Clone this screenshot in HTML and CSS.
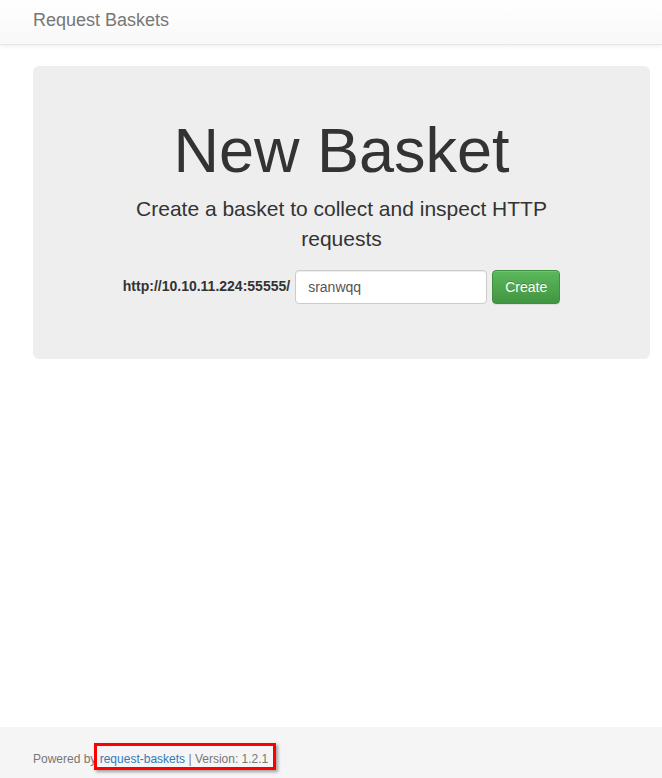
FILE: index.html
```html
<!DOCTYPE html>
<html lang="en">
<head>
<meta charset="utf-8">
<title>Request Baskets</title>
<link rel="stylesheet" href="styles.css">
</head>
<body>
<div class="page">
  <nav class="navbar">
    <div class="container">
      <a class="brand" href="#">Request Baskets</a>
    </div>
  </nav>
  <main class="container main">
    <section class="jumbotron">
      <h1 class="title">New Basket</h1>
      <p class="lead">Create a basket to collect and inspect HTTP requests</p>
      <form class="basket-form">
        <label class="base-url" for="basket-name">http://10.10.11.224:55555/</label>
        <input class="form-control" id="basket-name" type="text" value="sranwqq">
        <button class="btn-success" type="button">Create</button>
      </form>
    </section>
  </main>
  <footer class="footer">
    <div class="container">
      <p class="muted">Powered by <a href="#">request-baskets</a> | Version: 1.2.1</p>
    </div>
    <div class="highlight-box"></div>
  </footer>
</div>
</body>
</html>
```

FILE: styles.css
```css
* { box-sizing: border-box; }

html, body {
  margin: 0;
  padding: 0;
}

body {
  font-family: "Liberation Sans", Arial, Helvetica, sans-serif;
  font-size: 14px;
  line-height: 1.42857;
  color: #333;
  background: #fff;
}

.page {
  min-height: 100vh;
  display: flex;
  flex-direction: column;
}

.container {
  padding-left: 33px;
  padding-right: 12px;
}

.navbar {
  height: 45px;
  background-image: linear-gradient(to bottom, #ffffff 0%, #f8f8f8 100%);
  border-bottom: 1px solid #e7e7e7;
  box-shadow: inset 0 1px 0 rgba(255,255,255,.15), 0 1px 5px rgba(0,0,0,.075);
}

.brand {
  display: inline-block;
  padding-top: 10px;
  font-size: 18px;
  line-height: 20px;
  color: #777;
  text-decoration: none;
}

.main {
  margin-top: 21px;
}

.jumbotron {
  background: #eeeeee;
  border-radius: 6px;
  padding: 50px 60px 55px;
  text-align: center;
}

.title {
  margin: 0 0 9px;
  font-size: 63px;
  font-weight: 500;
  line-height: 1.1;
  color: #333;
}

.lead {
  max-width: 450px;
  margin: 0 auto 15px;
  font-size: 21px;
  font-weight: 300;
  line-height: 30px;
}

.basket-form {
  display: flex;
  justify-content: center;
  align-items: center;
  gap: 4px;
  margin: 0;
  padding-top: 1px;
}

.base-url {
  font-weight: bold;
  font-size: 14px;
  color: #333;
}

.form-control {
  width: 192px;
  height: 34px;
  padding: 6px 12px;
  font-family: inherit;
  font-size: 14px;
  color: #555;
  background: #fff;
  border: 1px solid #ccc;
  border-radius: 4px;
  box-shadow: inset 0 1px 1px rgba(0,0,0,.075);
  margin-left: 1px;
}

.btn-success {
  height: 34px;
  padding: 6px 12px;
  margin-left: 1px;
  font-family: inherit;
  font-size: 14px;
  line-height: 20px;
  color: #fff;
  background-image: linear-gradient(to bottom, #5cb85c 0%, #419641 100%);
  border: 1px solid #3e8f3e;
  border-radius: 4px;
  text-shadow: 0 -1px 0 rgba(0,0,0,.2);
  box-shadow: inset 0 1px 0 rgba(255,255,255,.15), 0 1px 1px rgba(0,0,0,.075);
}

.footer {
  position: relative;
  margin-top: auto;
  height: 51px;
  background: #f5f5f5;
}

.muted {
  margin: 0;
  padding-top: 24px;
  font-size: 12px;
  line-height: 17px;
  color: #777;
}

.muted a {
  color: #337ab7;
  text-decoration: none;
}

.highlight-box {
  position: absolute;
  left: 94px;
  top: 16px;
  width: 182px;
  height: 27px;
  border: 3px solid #ff0000;
  box-shadow: 2px 2px 3px rgba(0,0,0,.35);
}
```
